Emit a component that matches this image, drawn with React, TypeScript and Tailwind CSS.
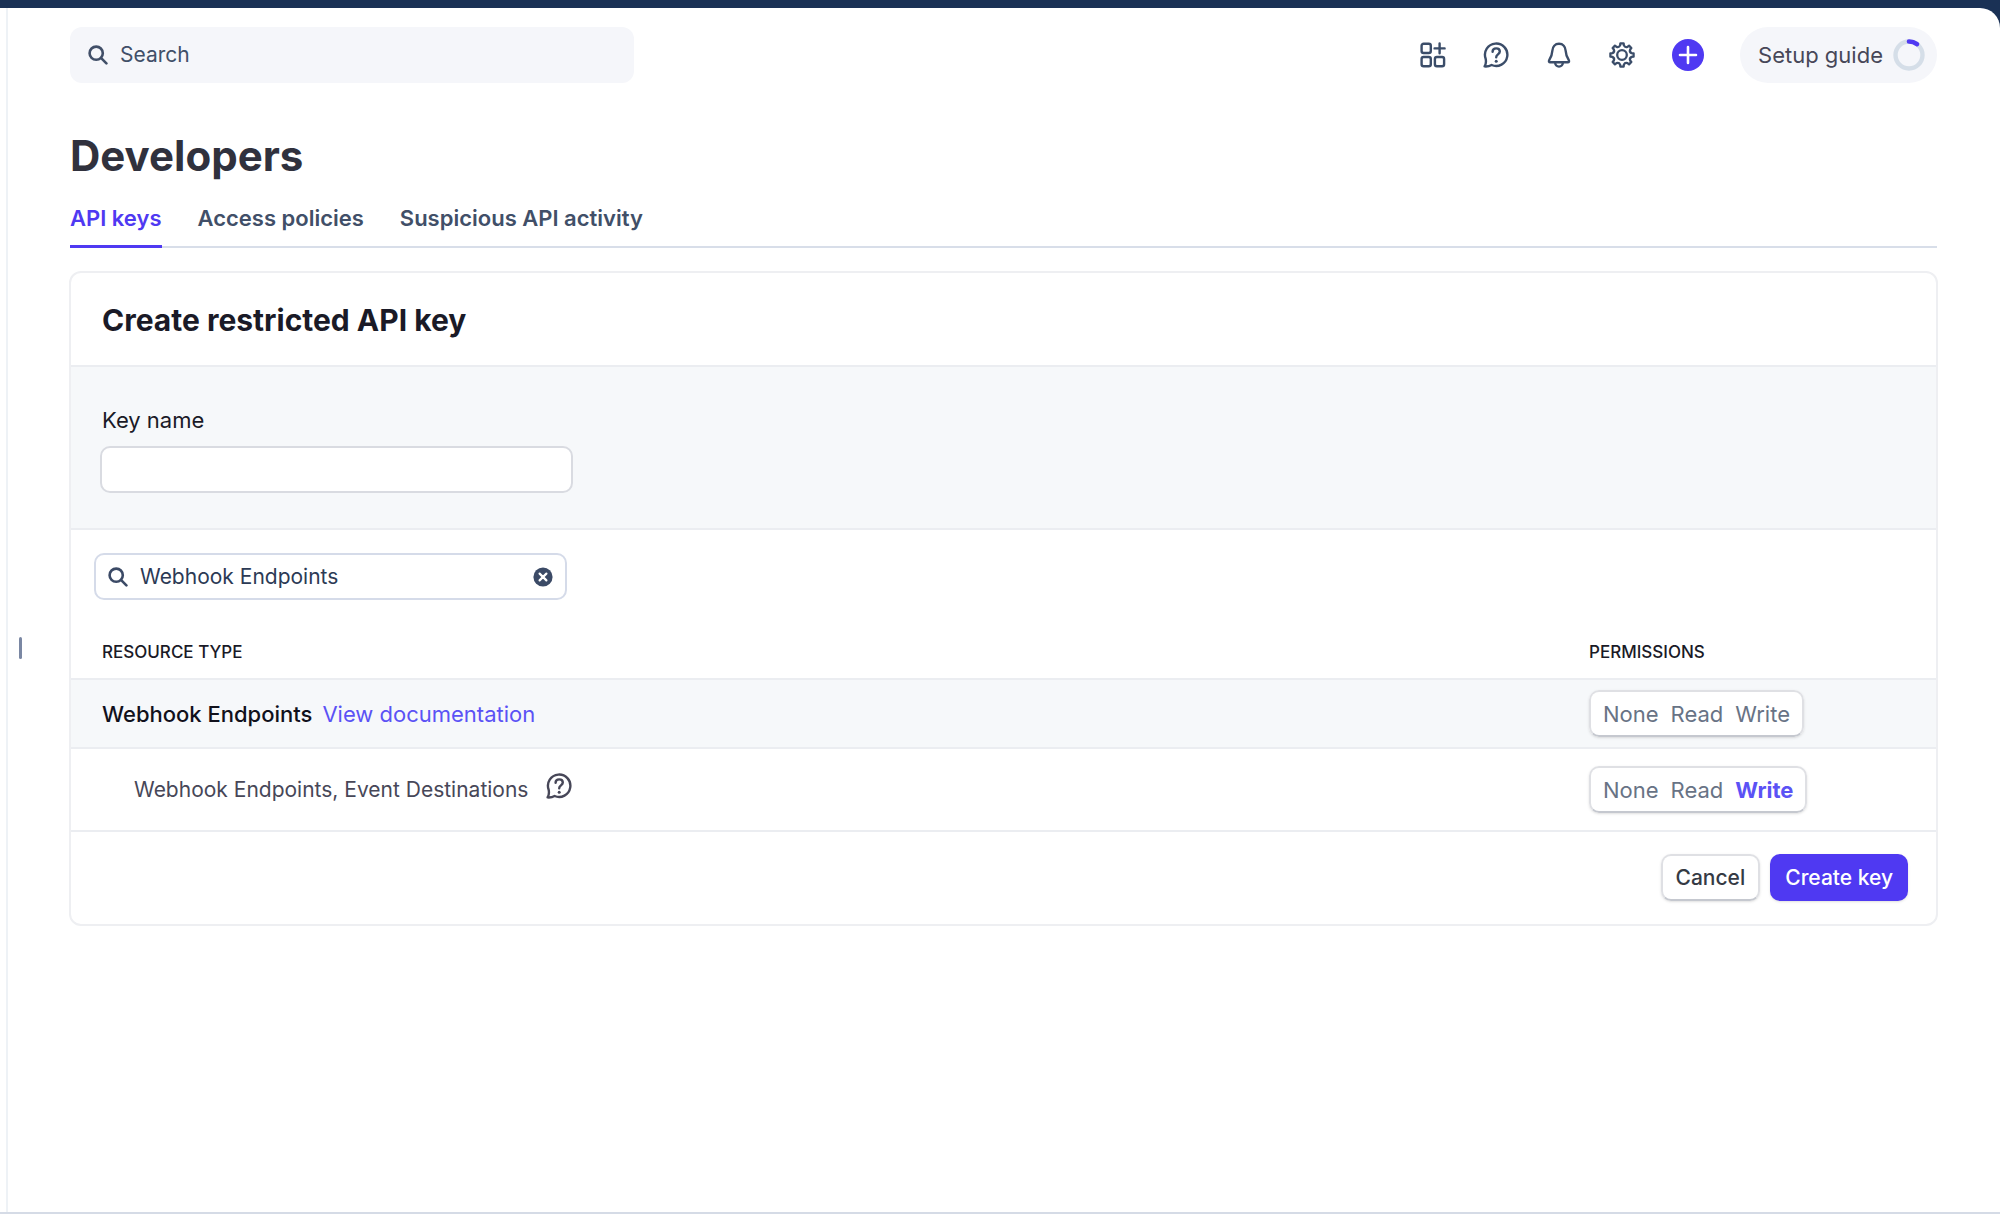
import { ReactNode, useState } from "react";

type Permission = "None" | "Read" | "Write";

const levels: Permission[] = ["None", "Read", "Write"];

const tabs = ["API keys", "Access policies", "Suspicious API activity"];

function SearchIcon({ className }: { className?: string }) {
  return (
    <svg
      viewBox="0 0 20 20"
      className={className}
      fill="none"
      stroke="currentColor"
      strokeWidth="2.6"
      strokeLinecap="round"
      aria-hidden="true"
    >
      <circle cx="8.2" cy="8.2" r="6.6" />
      <path d="M13.2 13.2l5.2 5.2" />
    </svg>
  );
}

function AppsIcon() {
  return (
    <svg
      viewBox="0 0 26 26"
      className="size-[26px]"
      fill="none"
      stroke="currentColor"
      strokeWidth="2.4"
      strokeLinecap="round"
      aria-hidden="true"
    >
      <rect x="1.6" y="1.8" width="9.2" height="9.2" rx="2" />
      <rect x="1.6" y="15" width="9.2" height="9.2" rx="2" />
      <rect x="14.9" y="15" width="9.2" height="9.2" rx="2" />
      <path d="M19.6 1.5v9.8M14.6 6.4h10" />
    </svg>
  );
}

function HelpIcon() {
  return (
    <svg
      viewBox="0 0 26 26"
      className="size-[26px]"
      fill="none"
      stroke="currentColor"
      strokeWidth="2.4"
      strokeLinecap="round"
      strokeLinejoin="round"
      aria-hidden="true"
    >
      <path d="M2.6 16.5A11.2 11.2 0 1 1 8.6 23C6.5 24.2 4 24.6 1.6 24.4 2.9 22.2 3.3 19.5 2.6 16.5Z" />
      <path d="M9.6 9.8C9.6 7.7 11.1 6.4 13.2 6.4s3.6 1.3 3.6 3.2c0 2.7-3.6 2.9-3.6 5.6" />
      <circle cx="13.2" cy="19.3" r="1.5" fill="currentColor" stroke="none" />
    </svg>
  );
}

function BellIcon() {
  return (
    <svg
      viewBox="0 0 24 26"
      className="h-[26px] w-6"
      fill="none"
      stroke="currentColor"
      strokeWidth="2.4"
      strokeLinecap="round"
      strokeLinejoin="round"
      aria-hidden="true"
    >
      <path d="M12 1.8C8 1.8 5.6 4.8 5.4 8.5 5.2 12.3 4 15.3 2.2 18.2 1.6 19.4 2 20.2 3.2 20.2H20.8C22 20.2 22.4 19.4 21.8 18.2 20 15.3 18.8 12.3 18.6 8.5 18.4 4.8 16 1.8 12 1.8Z" />
      <path d="M8.2 20.8a3.8 3.8 0 0 0 7.6 0" />
    </svg>
  );
}

// outline of an eight toothed gear around 13,13
function gearPath() {
  const at = (deg: number, r: number) => {
    const a = ((deg - 90) * Math.PI) / 180;
    return `${(13 + r * Math.cos(a)).toFixed(2)} ${(13 + r * Math.sin(a)).toFixed(2)}`;
  };
  let d = `M${at(-8, 11.7)}`;
  for (let t = 0; t < 360; t += 45) {
    d += `L${at(t + 8, 11.7)}L${at(t + 11, 9.8)}`;
    d += `Q${at(t + 22.5, 7.8)} ${at(t + 34, 9.8)}L${at(t + 37, 11.7)}`;
  }
  return d + "Z";
}

function GearIcon() {
  return (
    <svg
      viewBox="0 0 26 26"
      className="size-[26px]"
      fill="none"
      stroke="currentColor"
      strokeWidth="2.3"
      strokeLinejoin="round"
      aria-hidden="true"
    >
      <path d={gearPath()} />
      <circle cx="13" cy="13" r="4.8" />
    </svg>
  );
}

function IconButton({ label, children }: { label: string; children: ReactNode }) {
  return (
    <button
      type="button"
      aria-label={label}
      className="flex size-8 cursor-pointer items-center justify-center text-[#3b4d69]"
    >
      {children}
    </button>
  );
}

function PermissionPicker({
  name,
  value,
  onChange,
}: {
  name: string;
  value: Permission | null;
  onChange: (p: Permission) => void;
}) {
  return (
    <fieldset
      aria-label={`${name} permissions`}
      className="flex h-[47px] w-fit items-center gap-3 rounded-[10px] border-2 border-[#dfe0e4] border-b-[#c5c8cf] bg-white px-3 text-[22px] shadow-sm"
    >
      {levels.map((level) => (
        <label
          key={level}
          className={
            value === level
              ? "relative cursor-pointer font-bold text-[#5b52f5]"
              : "relative cursor-pointer text-[#687385]"
          }
        >
          <input
            type="radio"
            name={name}
            className="absolute inset-0 cursor-pointer appearance-none"
            checked={value === level}
            onChange={() => onChange(level)}
          />
          {level}
        </label>
      ))}
    </fieldset>
  );
}

function TopBar() {
  return (
    <header className="flex items-center justify-between">
      <label className="flex h-14 w-[564px] items-center gap-3 rounded-xl bg-[#f5f6fa] px-[18px] text-[#414f68]">
        <SearchIcon className="size-5" />
        <input
          type="search"
          aria-label="Search"
          placeholder="Search"
          className="min-w-0 flex-1 bg-transparent outline-none placeholder:text-[#414f68]"
        />
      </label>
      <div className="flex items-center gap-[31px]">
        <IconButton label="Apps">
          <AppsIcon />
        </IconButton>
        <IconButton label="Help">
          <HelpIcon />
        </IconButton>
        <IconButton label="Notifications">
          <BellIcon />
        </IconButton>
        <IconButton label="Settings">
          <GearIcon />
        </IconButton>
        <div className="flex items-center gap-9 pl-[3px]">
          <button
            type="button"
            aria-label="Create"
            className="flex size-8 cursor-pointer items-center justify-center rounded-full bg-[#4f39f2] text-white"
          >
            <svg
              viewBox="0 0 20 20"
              className="size-5"
              stroke="currentColor"
              strokeWidth="2.6"
              strokeLinecap="round"
              aria-hidden="true"
            >
              <path d="M10 2v16M2 10h16" />
            </svg>
          </button>
          <button
            type="button"
            className="flex h-14 cursor-pointer items-center gap-[10px] rounded-full bg-[#f5f6fa] pr-3 pl-[18px] text-[22px] text-[#474758]"
          >
            Setup guide
            <svg viewBox="0 0 32 32" className="size-8" fill="none" aria-hidden="true">
              <circle cx="16" cy="16" r="13.5" stroke="#d5dee8" strokeWidth="4.4" />
              <path
                d="M16 2.5A13.5 13.5 0 0 1 24 5.1"
                stroke="#4f39f2"
                strokeWidth="4.6"
                strokeLinecap="round"
              />
            </svg>
          </button>
        </div>
      </div>
    </header>
  );
}

function Tabs() {
  const [active, setActive] = useState(0);
  return (
    <nav className="mt-[22px] flex gap-9 border-b-2 border-[#d8dee9] text-[22px] font-semibold">
      {tabs.map((tab, i) => (
        <a
          key={tab}
          href="#"
          onClick={() => setActive(i)}
          className={
            active === i
              ? "-mb-0.5 border-b-3 border-[#4f39f2] pb-[13px] text-[#4f39f2]"
              : "-mb-0.5 border-b-3 border-transparent pb-[13px] text-[#414f68]"
          }
        >
          {tab}
        </a>
      ))}
    </nav>
  );
}

function RestrictedKeyForm() {
  const [keyName, setKeyName] = useState("");
  const [filter, setFilter] = useState("Webhook Endpoints");
  const [group, setGroup] = useState<Permission | null>(null);
  const [endpoint, setEndpoint] = useState<Permission | null>("Write");

  return (
    <form
      className="-mx-px mt-[23px] overflow-hidden rounded-xl border-2 border-[#eeeff2]"
      onSubmit={(e) => e.preventDefault()}
    >
      <h2 className="border-b-2 border-[#ebedf1] px-[31px] pt-[29px] pb-[27px] text-[30px] leading-9 font-bold text-[#1a1a27]">
        Create restricted API key
      </h2>
      <div className="flex flex-col items-start border-b-2 border-[#ebedf1] bg-[#f6f8fa] px-[29px] pt-[39px] pb-[35px]">
        <label htmlFor="key-name" className="px-0.5 text-[22px] text-[#1a1a27]">
          Key name
        </label>
        <input
          id="key-name"
          value={keyName}
          onChange={(e) => setKeyName(e.target.value)}
          className="mt-3 h-[47px] w-[473px] rounded-[10px] border-2 border-[#d9dbe1] bg-white px-3 outline-none"
        />
      </div>
      <div className="px-[23px] pt-[23px]">
        <div className="flex h-[47px] w-[473px] items-center gap-3 rounded-[10px] border-2 border-[#d5dbe9] px-3 text-[#3b4a66]">
          <SearchIcon className="size-5" />
          <input
            aria-label="Filter resources"
            value={filter}
            onChange={(e) => setFilter(e.target.value)}
            className="min-w-0 flex-1 text-[#2c3a55] outline-none"
          />
          <button type="button" aria-label="Clear" onClick={() => setFilter("")}>
            <svg viewBox="0 0 20 20" className="size-5" aria-hidden="true">
              <circle cx="10" cy="10" r="9.6" fill="currentColor" />
              <path
                d="M6.6 6.6l6.8 6.8M13.4 6.6l-6.8 6.8"
                stroke="#fff"
                strokeWidth="2.2"
                strokeLinecap="round"
              />
            </svg>
          </button>
        </div>
      </div>
      <table className="w-full text-left">
        <thead>
          <tr className="border-b-2 border-[#ebedf1] text-[17px] leading-6 text-[#1a1a27]">
            <th className="pt-10 pb-[14px] pl-[31px] font-medium">RESOURCE TYPE</th>
            <th className="w-[347px] pt-10 pb-[14px] font-medium">PERMISSIONS</th>
          </tr>
        </thead>
        <tbody>
          <tr className="h-[69px] border-b-2 border-[#ebedf1] bg-[#f6f8fa]">
            <td className="pl-[31px] text-[22px]">
              <span className="font-medium text-[#11111c]">Webhook Endpoints</span>
              <a href="#" className="ml-[10px] text-[#5b52f5]">
                View documentation
              </a>
            </td>
            <td>
              <PermissionPicker
                name="Webhook Endpoints"
                value={group}
                onChange={setGroup}
              />
            </td>
          </tr>
          <tr className="h-[83px] border-b-2 border-[#ebedf1]">
            <td className="pl-[63px] text-[#474758]">
              <div className="flex items-center gap-[18px]">
                Webhook Endpoints, Event Destinations
                <button type="button" aria-label="More information" className="pb-2">
                  <HelpIcon />
                </button>
              </div>
            </td>
            <td>
              <PermissionPicker
                name="Webhook Endpoints, Event Destinations"
                value={endpoint}
                onChange={setEndpoint}
              />
            </td>
          </tr>
        </tbody>
      </table>
      <div className="flex justify-end gap-[10px] px-7 pt-[22px] pb-[23px]">
        <button
          type="button"
          className="h-[47px] cursor-pointer rounded-[10px] border-2 border-[#dfe0e4] border-b-[#c5c8cf] px-[13px] font-medium text-[#353a44] shadow-sm"
        >
          Cancel
        </button>
        <button
          type="submit"
          className="h-[47px] cursor-pointer rounded-[10px] bg-[#4f39f2] px-[15px] font-medium text-white shadow-sm"
        >
          Create key
        </button>
      </div>
    </form>
  );
}

export default function App() {
  return (
    <div className="min-h-screen bg-[#1a3155] pt-2 font-['Inter',sans-serif] text-[21px] leading-7">
      <div className="flex min-h-[calc(100vh-8px)] rounded-tr-[20px] border-b-2 border-[#d5dbe6] bg-white pl-1.5">
        {/* resize handle between the sidebar and the page */}
        <div className="w-16 shrink-0 border-l-2 border-[#eef2f6] pt-[629px] pl-[11px]">
          <div className="h-[22px] w-[3px] rounded-full bg-[#7a87a3]" />
        </div>
        <main className="min-w-0 flex-1 pt-[19px] pr-[63px]">
          <TopBar />
          <h1 className="mt-[47px] text-[42px] leading-[52px] font-bold text-[#30313d]">
            Developers
          </h1>
          <Tabs />
          <RestrictedKeyForm />
        </main>
      </div>
    </div>
  );
}
